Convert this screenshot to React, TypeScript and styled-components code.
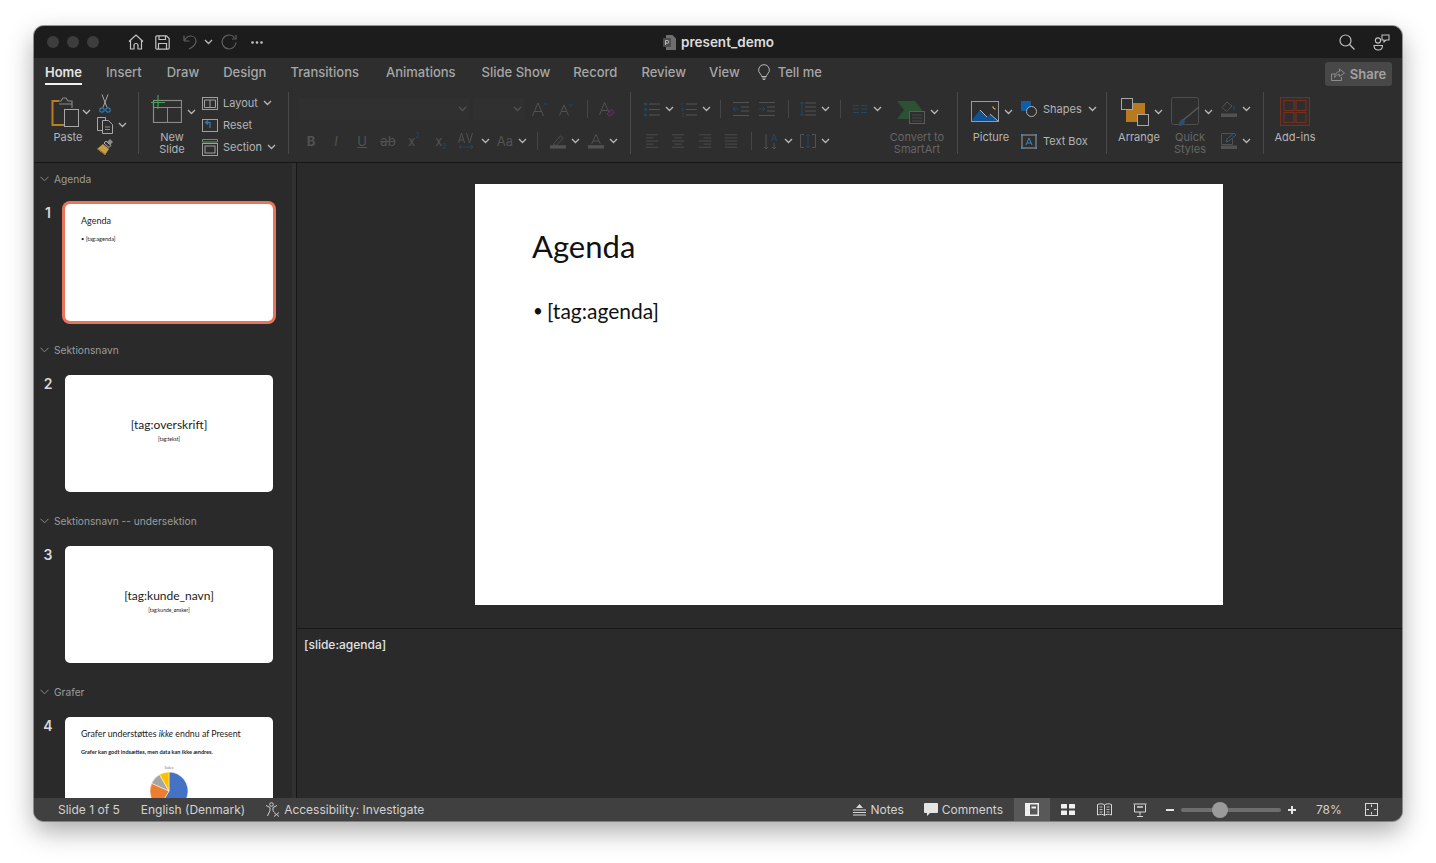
import React from "react";
import styled, {createGlobalStyle} from "styled-components";

const UI_FONT = `Inter, "Liberation Sans", sans-serif`;
const SLIDE_FONT = `Lato, "Open Sans", sans-serif`;

const ON = "#b4b4b4";
const OFF = "#525252";
const OFF_BLUE = "#24465f";

const GlobalStyle = createGlobalStyle`
  html, body {
    margin: 0;
    padding: 0;
    background: #fff;
    font-family: ${UI_FONT};
  }
`;

const Page = styled.div`
  width: 1436px;
  height: 863px;
  box-sizing: border-box;
  padding: 26px 34px 42px;
  overflow: hidden;
`;

const Window = styled.div`
  height: 100%;
  display: flex;
  flex-direction: column;
  border-radius: 10px;
  overflow: hidden;
  background: #2a2a2a;
  box-shadow: 0 0 0 1px rgba(90, 90, 90, .6), 0 10px 26px rgba(0, 0, 0, .34);
`;

/* title bar */
const TitleBar = styled.div`
  position: relative;
  height: 32px;
  flex: none;
  display: flex;
  align-items: center;
  background: #1c1c1c;
  padding-left: 13px;
`;

const Light = styled.span`
  width: 12px;
  height: 12px;
  border-radius: 50%;
  background: #3d3d3d;
  margin-right: 8px;
`;

const QuickIcon = styled.span<{ $ml: number }>`
  display: flex;
  margin-left: ${({$ml}) => $ml}px;
`;

const Title = styled.div`
  position: absolute;
  left: 629px;
  top: 0;
  height: 32px;
  display: flex;
  align-items: center;
  gap: 5px;
  font-size: 13.5px;
  font-weight: 600;
  color: #dcdcdc;
`;

const TitleRight = styled.div`
  margin-left: auto;
  display: flex;
  align-items: center;
  gap: 18px;
  padding-right: 12px;
`;

/* tabs */
const TabRow = styled.div`
  height: 32px;
  flex: none;
  display: flex;
  align-items: flex-start;
  background: #2e2e2e;
  padding: 0 10px 0 11px;
  font-size: 13px;
  font-weight: 500;
  color: #a6a6a6;
`;

const Tab = styled.div<{ $active?: boolean; $ml?: number }>`
  height: 22px;
  line-height: 22px;
  padding-top: 3px;
  margin-left: ${({$ml}) => $ml ?? 0}px;
  border-bottom: 2px solid ${({$active}) => $active ? "#f0f0f0" : "transparent"};
  color: ${({$active}) => $active ? "#e4e4e4" : "#a6a6a6"};
  font-weight: ${({$active}) => $active ? 600 : 500};
  white-space: nowrap;
`;

const TellMe = styled(Tab)`
  display: flex;
  align-items: center;
  gap: 8px;
`;

const ShareButton = styled.div`
  margin: 4px 0 0 auto;
  width: 67px;
  height: 24px;
  box-sizing: border-box;
  display: flex;
  align-items: center;
  justify-content: center;
  gap: 5px;
  border-radius: 3px;
  background: #484848;
  color: #a2a2a2;
  font-weight: 600;
`;

/* ribbon */
const Ribbon = styled.div`
  height: 73px;
  flex: none;
  box-sizing: border-box;
  display: flex;
  align-items: flex-start;
  padding-top: 2px;
  background: #2e2e2e;
  border-bottom: 1px solid #161616;
  font-size: 11px;
  font-weight: 400;
  color: ${ON};
`;

const Group = styled.div<{ $w: number }>`
  width: ${({$w}) => $w}px;
  height: 62px;
  flex: none;
  box-sizing: border-box;
  display: flex;
  border-right: 1px solid #4a4a4a;

  &:last-child {
    border-right: none;
  }
`;

const LargeTool = styled.div<{ $w: number; $ml: number; $off?: boolean }>`
  width: ${({$w}) => $w}px;
  margin-left: ${({$ml}) => $ml}px;
  flex: none;
  display: flex;
  flex-direction: column;
  align-items: center;
  color: ${({$off}) => $off ? "#666" : ON};
`;

const LargeIcon = styled.div<{ $pl?: number; $center?: boolean; $gap?: number }>`
  align-self: stretch;
  height: 39px;
  flex: none;
  box-sizing: border-box;
  display: flex;
  align-items: center;
  justify-content: ${({$center}) => $center ? "center" : "flex-start"};
  gap: ${({$gap}) => $gap ?? 5}px;
  padding-left: ${({$pl}) => $pl ?? 0}px;
`;

const Raised = styled.span<{ $by: number }>`
  display: flex;
  flex: none;
  margin-top: -${({$by}) => $by}px;
`;

const LargeLabel = styled.div`
  line-height: 12px;
  text-align: center;
  white-space: nowrap;
`;

const SmallStack = styled.div<{ $ml: number }>`
  margin-left: ${({$ml}) => $ml}px;
  flex: none;
  display: flex;
  flex-direction: column;
`;

const StackRow = styled.div`
  height: 22px;
  flex: none;
  display: flex;
  align-items: center;
  gap: 5px;
`;

const NamedRow = styled(StackRow)`
  gap: 6px;
`;

const RowColumn = styled.div<{ $w?: number }>`
  flex: none;
  width: ${({$w}) => $w ? `${$w}px` : "auto"};
  display: flex;
  flex-direction: column;
`;

const TopRow = styled.div`
  height: 34px;
  flex: none;
  display: flex;
  align-items: center;
`;

const BottomRow = styled.div`
  height: 30px;
  flex: none;
  display: flex;
  align-items: center;
`;

const DropBox = styled.div<{ $w: number; $ml?: number }>`
  width: ${({$w}) => $w}px;
  height: 22px;
  margin-left: ${({$ml}) => $ml ?? 0}px;
  box-sizing: border-box;
  display: flex;
  align-items: center;
  justify-content: flex-end;
  padding-right: 3px;
  background: #303030;
  border-radius: 2px;
`;

const Tool = styled.div<{ $ml?: number; $w?: number }>`
  width: ${({$w}) => $w ?? 16}px;
  margin-left: ${({$ml}) => $ml ?? 0}px;
  height: 18px;
  flex: none;
  display: flex;
  align-items: center;
  justify-content: center;
  font-size: 13px;
  line-height: 18px;
  color: ${OFF};
`;

const Sep = styled.div<{ $ml: number }>`
  width: 1px;
  height: 18px;
  flex: none;
  margin-left: ${({$ml}) => $ml}px;
  background: #464646;
`;

const Sup = styled.span<{ $sub?: boolean }>`
  font-size: 7px;
  line-height: 7px;
  align-self: ${({$sub}) => $sub ? "flex-end" : "flex-start"};
  color: ${OFF_BLUE};
`;

/* work area */
const Work = styled.div`
  flex: 1;
  min-height: 0;
  display: flex;
`;

const Sidebar = styled.div`
  width: 258px;
  flex: none;
  box-sizing: border-box;
  padding-top: 8px;
  overflow: hidden;
  background: #2a2a2a;
`;

const Gutter = styled.div`
  width: 4px;
  flex: none;
  background: #313131;
  border-right: 1px solid #171717;
`;

const SectionHead = styled.div`
  height: 16px;
  display: flex;
  align-items: center;
  gap: 5px;
  padding-left: 6px;
  font-size: 10.2px;
  color: #9c9c9c;
`;

const SlideRow = styled.div`
  display: flex;
  margin: 17px 0 21px;
`;

const SlideNum = styled.div`
  width: 28px;
  margin-right: 3px;
  text-align: center;
  font-size: 14px;
  font-weight: 600;
  line-height: 17px;
  color: #d8d8d8;
`;

const Thumb = styled.div<{ $selected?: boolean; $center?: boolean }>`
  width: 208px;
  height: 117px;
  flex: none;
  box-sizing: border-box;
  overflow: hidden;
  display: flex;
  flex-direction: column;
  align-items: ${({$center}) => $center ? "center" : "flex-start"};
  justify-content: ${({$center}) => $center ? "center" : "flex-start"};
  padding: ${({$center}) => $center ? "0 0 6px" : "10px 16px 0"};
  border-radius: 5px;
  background: #fff;
  color: #222;
  font-family: ${SLIDE_FONT};
  box-shadow: ${({$selected}) => $selected ? "0 0 0 3px #e9735c" : "none"};
`;

const ThumbTitle = styled.div<{ $size: number }>`
  font-size: ${({$size}) => $size}px;
  line-height: 14px;
  white-space: nowrap;
`;

const ThumbText = styled.div<{ $mt: number; $size: number; $bold?: boolean }>`
  margin-top: ${({$mt}) => $mt}px;
  font-size: ${({$size}) => $size}px;
  line-height: 7px;
  font-weight: ${({$bold}) => $bold ? 700 : 400};
  white-space: nowrap;
`;

const ChartCaption = styled.div`
  align-self: center;
  margin-top: 9px;
  font-size: 4px;
  line-height: 5px;
  color: #777;
`;

const PieHolder = styled.div`
  align-self: center;
  margin-top: 2px;
  display: flex;
`;

const MainArea = styled.div`
  flex: 1;
  min-width: 0;
  display: flex;
  flex-direction: column;
`;

const Stage = styled.div`
  height: 465px;
  flex: none;
  box-sizing: border-box;
  display: flex;
  justify-content: center;
  padding: 21px 1px 0 0;
`;

const Slide = styled.div`
  width: 748px;
  height: 421px;
  box-sizing: border-box;
  padding: 42px 57px 0;
  background: #fff;
  color: #111;
  font-family: ${SLIDE_FONT};
`;

const SlideTitle = styled.div`
  font-size: 31px;
  line-height: 40px;
`;

const SlideBullet = styled.div`
  margin-top: 31px;
  display: flex;
  font-size: 21px;
  line-height: 28px;
`;

const BulletDot = styled.span`
  width: 15px;
  flex: none;
  font-size: 17px;
  padding-left: 1px;
  box-sizing: border-box;
`;

const Notes = styled.div`
  flex: 1;
  border-top: 1px solid #171717;
  padding: 8px 7px;
  font-size: 12px;
  line-height: 16px;
  font-weight: 500;
  color: #e2e2e2;
`;

/* status bar */
const StatusBar = styled.div`
  height: 23px;
  flex: none;
  box-sizing: border-box;
  display: flex;
  align-items: center;
  padding-left: 24px;
  background: #404040;
  font-size: 12px;
  color: #d2d2d2;
  white-space: nowrap;
`;

const StatusItem = styled.div<{ $ml?: number; $w?: number }>`
  display: flex;
  align-items: center;
  gap: 4px;
  height: 100%;
  width: ${({$w}) => $w ? `${$w}px` : "auto"};
  margin-left: ${({$ml}) => $ml ?? 0}px;
`;

const StatusRight = styled.div`
  margin-left: auto;
  height: 100%;
  display: flex;
  align-items: center;
  padding-right: 24px;
`;

const ViewGroup = styled.div`
  margin-left: 11px;
  height: 100%;
  display: flex;
`;

const ViewButton = styled.div<{ $active?: boolean }>`
  width: 36px;
  height: 100%;
  display: flex;
  align-items: center;
  justify-content: center;
  background: ${({$active}) => $active ? "#585858" : "transparent"};
`;

const ZoomTrack = styled.div`
  position: relative;
  width: 100px;
  height: 4px;
  margin: 0 3px;
  border-radius: 2px;
  background: #6e6e6e;
`;

const ZoomKnob = styled.div`
  position: absolute;
  left: 31px;
  top: -6px;
  width: 16px;
  height: 16px;
  border-radius: 50%;
  background: #9b9b9b;
`;

/* icons */
type IconProps = { c?: string };

const Chev = ({c = ON}: IconProps) => (
    <svg width="9" height="6" viewBox="0 0 9 6" fill="none" style={{flex: "none"}}>
        <path d="M1 1l3.5 3.5L8 1" stroke={c} strokeWidth="1.4"/>
    </svg>
);

const SectionChev = () => (
    <svg width="9" height="6" viewBox="0 0 9 6" fill="none">
        <path d="M.5.8l4 4 4-4" stroke="#8c8c8c" strokeWidth="1"/>
    </svg>
);

const HomeIcon = () => (
    <svg width="16" height="16" viewBox="0 0 16 16" fill="none" stroke="#c4c4c4" strokeWidth="1.2">
        <path d="M1 7.5L8 1l7 6.5M2.5 6.5V15H6v-3.5a2 2 0 014 0V15h3.5V6.5"/>
    </svg>
);

const SaveIcon = () => (
    <svg width="15" height="15" viewBox="0 0 15 15" fill="none" stroke="#c4c4c4" strokeWidth="1.2">
        <path d="M2 .8h9.5l2.700 2.700V13a1.200 1.200 0 01-1.200 1.200H2A1.200 1.200 0 01.8 13V2A1.200 1.200 0 012 .8z"/>
        <path d="M4 1v3.500h6.500V1M3.500 14V8.500h8V14"/>
    </svg>
);

const UndoIcon = () => (
    <svg width="14" height="16" viewBox="0 0 14 16" fill="none" stroke="#5e5e5e" strokeWidth="1.2">
        <path d="M1 7V1.5M1 7h5.5M1 7c2-3.500 4-5 6.500-5 3 0 5.500 2 5.500 5 0 3-3 6-7 8"/>
    </svg>
);

const RedoIcon = () => (
    <svg width="16" height="16" viewBox="0 0 16 16" fill="none" stroke="#5e5e5e" strokeWidth="1.2">
        <path d="M13.5 3.5A7 7 0 108 15a7 7 0 007-6.5M15 1v4h-4"/>
    </svg>
);

const DotsIcon = () => (
    <svg width="12" height="3" viewBox="0 0 12 3" fill="#c4c4c4">
        <circle cx="1.5" cy="1.5" r="1.3"/>
        <circle cx="6" cy="1.5" r="1.3"/>
        <circle cx="10.5" cy="1.5" r="1.3"/>
    </svg>
);

const FileIcon = () => (
    <svg width="13" height="15" viewBox="0 0 13 15">
        <path d="M3 0h6.5L13 3.500V15H3z" fill="#6e6e6e"/>
        <rect y="3" width="8" height="9" rx="1" fill="#4c4c4c"/>
        <path d="M2.500 10V5.500h2a1.300 1.300 0 010 2.700h-2" fill="none" stroke="#bbb" strokeWidth="1"/>
    </svg>
);

const SearchIcon = () => (
    <svg width="16" height="16" viewBox="0 0 16 16" fill="none" stroke="#c0c0c0" strokeWidth="1.2">
        <circle cx="6.5" cy="6.5" r="5.5"/>
        <path d="M10.5 10.5L15.5 15.5"/>
    </svg>
);

const PeopleIcon = () => (
    <svg width="17" height="17" viewBox="0 0 17 17" fill="none" stroke="#c0c0c0" strokeWidth="1.1">
        <circle cx="5" cy="6.5" r="2.6"/>
        <path d="M1 11.500h8.500c0 3-1.500 4.500-4.200 4.500S1 14.500 1 11.500z"/>
        <path d="M9 1h7v5h-3l-2 2V6H9z"/>
    </svg>
);

const BulbIcon = () => (
    <svg width="12" height="16" viewBox="0 0 12 16" fill="none" stroke="#b4b4b4" strokeWidth="1">
        <path d="M6 .6a5.400 5.400 0 00-3.500 9.500c.8.800 1 1.500 1 2.400h5c0-.9.200-1.600 1-2.400A5.400 5.400 0 006 .6z"/>
        <path d="M4 14h4M4.800 15.500h2.400"/>
    </svg>
);

const ShareIcon = () => (
    <svg width="14" height="13" viewBox="0 0 14 13" fill="none" stroke="#8c8c8c" strokeWidth="1">
        <path d="M4 6H.5v6.500h10V9"/>
        <path d="M8.500 1l5 4-5 3.500v-2c-2.500 0-4 1-5 3 0-3.500 2-5.500 5-6z"/>
    </svg>
);

const PasteIcon = () => (
    <svg width="28" height="30" viewBox="0 0 28 30" fill="none" style={{flex: "none"}}>
        <path d="M8 4H1.500v24H13" stroke="#b97c22" strokeWidth="2"/>
        <path d="M8 4h2l2-3h3l2 3h4v7M8 7h13" stroke="#8a8a8a" strokeWidth="1.1"/>
        <rect x="13.5" y="12.5" width="14" height="17" fill="#2e2e2e" stroke="#a8a8a8"/>
    </svg>
);

const ScissorsIcon = () => (
    <svg width="12" height="19" viewBox="0 0 12 19" fill="none">
        <path d="M3 .5l5 13M9 .5l-5 13" stroke="#a8a8a8" strokeWidth="1"/>
        <circle cx="3" cy="16" r="2.2" stroke="#2f78b5" strokeWidth="1.2"/>
        <circle cx="9" cy="16" r="2.2" stroke="#2f78b5" strokeWidth="1.2"/>
    </svg>
);

const CopyIcon = () => (
    <svg width="16" height="17" viewBox="0 0 16 17" fill="none" stroke="#a8a8a8">
        <path d="M5 13.500H.5V.5h8v3"/>
        <path d="M5.500 3.500h6l4 4v9h-10z"/>
        <path d="M8 10h5M8 12.500h5" strokeWidth=".8"/>
    </svg>
);

const BrushIcon = () => (
    <svg width="16" height="16" viewBox="0 0 16 16">
        <path d="M9 2l5 4.500-2 2L7 4z" fill="none" stroke="#b4b4b4"/>
        <path d="M13 0l3 3-3 3-3-3z" fill="#b4b4b4" opacity=".7"/>
        <path d="M6 5l6 5-4 6-8-6z" fill="#c99b46"/>
        <path d="M1 10l8 6" stroke="#8d6a28"/>
    </svg>
);

const NewSlideIcon = () => (
    <svg width="31" height="28" viewBox="0 0 31 28" fill="none" style={{flex: "none"}}>
        <rect x="2.5" y="5.5" width="28" height="22" stroke="#8a8a8a" strokeWidth="1.2"/>
        <path d="M3 12.500h27.500M16.500 12.500v15" stroke="#8a8a8a"/>
        <path d="M7 0v14M0 7.500h14" stroke="#3fa34f" strokeWidth="1.2"/>
    </svg>
);

const LayoutIcon = () => (
    <svg width="16" height="13" viewBox="0 0 16 13" fill="none" stroke="#a0a0a0" style={{flex: "none"}}>
        <rect x=".5" y=".5" width="15" height="12"/>
        <path d="M2.500 3h11v7.500h-11zM8 3v7.500"/>
    </svg>
);

const ResetIcon = () => (
    <svg width="16" height="13" viewBox="0 0 16 13" fill="none" style={{flex: "none"}}>
        <rect x=".5" y=".5" width="15" height="12" stroke="#a0a0a0"/>
        <path d="M8 9V3.500H4M6 1.500l-2.500 2 2.500 2" stroke="#2f78b5" strokeWidth="1.3"/>
    </svg>
);

const SectionIcon = () => (
    <svg width="16" height="17" viewBox="0 0 16 17" fill="none" stroke="#a0a0a0" style={{flex: "none"}}>
        <path d="M.5.5h15V3H.5z" stroke="#5d9a6a"/>
        <rect x=".5" y="4.5" width="15" height="12"/>
        <rect x="3" y="7" width="10" height="7"/>
    </svg>
);

const SizeUpIcon = () => (
    <svg width="16" height="16" viewBox="0 0 16 16" fill="none" stroke={OFF}>
        <path d="M.5 15L6 2l5.500 13M2.500 10.500h7"/>
        <path d="M11.500 4.500l2-2.500 2 2.500" stroke={OFF_BLUE}/>
    </svg>
);

const SizeDownIcon = () => (
    <svg width="14" height="14" viewBox="0 0 14 14" fill="none" stroke={OFF}>
        <path d="M.5 13.500L5 3l4.500 10.500M2.200 9.500h5.600"/>
        <path d="M10 2l2 2.500L14 2" stroke={OFF_BLUE}/>
    </svg>
);

const ClearIcon = () => (
    <svg width="16" height="17" viewBox="0 0 16 17" fill="none" stroke={OFF}>
        <path d="M.5 14L5.500 1.500 10.500 12M2.500 9.500h6"/>
        <path d="M8 13l4.500-4.500 3 2.500-4.500 4.500z" stroke="#61365c" fill="#3e2c3c"/>
    </svg>
);

const AVIcon = () => (
    <svg width="16" height="18" viewBox="0 0 16 18" fill="none" stroke={OFF}>
        <path d="M.5 11l3-10 3 10M1.500 8h4M8.500 1l3 10 3-10"/>
        <path d="M1 15h14M3 13l-2 2 2 2M13 13l2 2-2 2" stroke={OFF_BLUE}/>
    </svg>
);

const HighlightIcon = () => (
    <svg width="17" height="15" viewBox="0 0 17 15" fill="none" stroke={OFF}>
        <path d="M4 10l7-8.500 3 2.500-7 7.500H4z"/>
        <rect y="11.5" width="17" height="3.5" fill={OFF} stroke="none"/>
    </svg>
);

const FontColorIcon = () => (
    <svg width="17" height="16" viewBox="0 0 17 16" fill="none" stroke={OFF}>
        <path d="M4 11L8.500 1 13 11M5.500 8h6"/>
        <rect y="12.5" width="17" height="3.5" fill={OFF} stroke="none"/>
    </svg>
);

const ListIcon = ({numbered}: { numbered?: boolean }) => (
    <svg width="16" height="15" viewBox="0 0 16 15" fill="none">
        <path d="M5 2h11M5 7.500h11M5 13h11" stroke={OFF}/>
        {numbered
            ? <path d="M1 .5v3M.5 6.500h2l-2 2h2M.5 11.500h2v3h-2" stroke={OFF_BLUE} strokeWidth=".8"/>
            : <path d="M0 2h3M0 7.500h3M0 13h3" stroke={OFF_BLUE} strokeWidth="2.5"/>}
    </svg>
);

const IndentIcon = ({flip}: { flip?: boolean }) => (
    <svg width="16" height="14" viewBox="0 0 16 14" fill="none">
        <path d="M0 .5h16M8 5h8M8 9h8M0 13.500h16" stroke={OFF}/>
        <path d={flip ? "M0 7h6M3.500 4.500L6 7 3.500 9.500" : "M6 7H0M2.500 4.500L0 7l2.500 2.500"} stroke={OFF_BLUE}/>
    </svg>
);

const LineSpacingIcon = () => (
    <svg width="16" height="16" viewBox="0 0 16 16" fill="none">
        <path d="M5 2h11M5 6h11M5 10h11M5 14h11" stroke={OFF}/>
        <path d="M2 1v14M0 3l2-2 2 2M0 13l2 2 2-2" stroke={OFF_BLUE}/>
    </svg>
);

const ColumnsIcon = () => (
    <svg width="14" height="8" viewBox="0 0 14 8" fill="none" stroke={OFF_BLUE}>
        <path d="M0 .5h6M8 .5h6M0 4h6M8 4h6M0 7.500h6M8 7.500h6"/>
    </svg>
);

const AlignIcon = ({mode}: { mode: "left" | "center" | "right" | "justify" }) => {
    const short = {left: "M0 5h10M0 13h10", center: "M3 5h10M3 13h10", right: "M6 5h10M6 13h10", justify: "M0 5h16M0 13h16"}[mode];
    return (
        <svg width="16" height="14" viewBox="0 0 16 18" fill="none" stroke={OFF}>
            <path d="M0 1h16M0 9h16M0 17h16"/>
            <path d={short}/>
        </svg>
    );
};

const TextDirIcon = () => (
    <svg width="16" height="17" viewBox="0 0 16 17" fill="none">
        <path d="M3 1v15M1 14l2 2 2-2" stroke={OFF}/>
        <path d="M8 8l3-7 3 7M9 6h4" stroke={OFF_BLUE}/>
        <path d="M11 10v6M9 14l2 2 2-2" stroke={OFF}/>
    </svg>
);

const TextAlignIcon = () => (
    <svg width="16" height="14" viewBox="0 0 16 14" fill="none">
        <path d="M4 .5H.5v13H4M12 .5h3.500v13H12" stroke={OFF}/>
        <path d="M8 0v14M6 2l2-2 2 2M6 12l2 2 2-2" stroke={OFF_BLUE}/>
    </svg>
);

const SmartArtIcon = () => (
    <svg width="28" height="24" viewBox="0 0 28 24" fill="none" style={{flex: "none"}}>
        <path d="M0 1h18l7 9-7 9H0l7-9z" fill="#2c5133"/>
        <rect x="12.5" y="11.5" width="15" height="12" fill="#2e2e2e" stroke="#5c5c5c"/>
        <path d="M15 15h10M15 18h10M15 21h10" stroke="#4e4e4e" strokeWidth=".8"/>
    </svg>
);

const PictureIcon = () => (
    <svg width="28" height="21" viewBox="0 0 28 21" fill="none" style={{flex: "none"}}>
        <path d="M1 19l8-10 7 7 3-3 8 7v.500H1z" fill="#0f5296"/>
        <path d="M9 9l7 7M19 13l8 7" stroke="#b8b8b8"/>
        <rect x=".5" y=".5" width="27" height="20" stroke="#9a9a9a"/>
        <path d="M22 5.500A2 2 0 0024.500 8 2.500 2.500 0 0122 5.500z" fill="#d49a3c" stroke="#d49a3c"/>
    </svg>
);

const ShapesIcon = () => (
    <svg width="16" height="16" viewBox="0 0 16 16" fill="none" style={{flex: "none"}}>
        <rect width="10" height="10" fill="#0f5fa8"/>
        <circle cx="10.5" cy="10.5" r="5" fill="#2e2e2e" stroke="#b0b0b0"/>
    </svg>
);

const TextBoxIcon = () => (
    <svg width="16" height="15" viewBox="0 0 16 15" fill="none" style={{flex: "none"}}>
        <rect x="1" y="1" width="14" height="13" stroke="#a0a0a0"/>
        <path d="M5 11l3-7 3 7M6 9h4" stroke="#3a85c5"/>
        <path d="M0 0h2v2H0zM14 0h2v2h-2zM0 13h2v2H0zM14 13h2v2h-2z" fill="#3a85c5"/>
    </svg>
);

const ArrangeIcon = () => (
    <svg width="28" height="28" viewBox="0 0 28 28" fill="none" style={{flex: "none"}}>
        <rect x="5" y="5" width="19" height="19" fill="#b97a1f"/>
        <rect x=".5" y=".5" width="11" height="11" fill="#2e2e2e" stroke="#a8a8a8"/>
        <rect x="16.5" y="16.5" width="11" height="11" fill="#2e2e2e" stroke="#a8a8a8"/>
    </svg>
);

const QuickStylesIcon = () => (
    <svg width="29" height="30" viewBox="0 0 29 30" fill="none" style={{flex: "none"}}>
        <rect x=".5" y=".5" width="27" height="27" rx="2" stroke="#4e4e4e"/>
        <path d="M11 24L28 10" stroke="#5a5a5a" strokeWidth="1.5"/>
        <path d="M8 29c0-5 2-7 4-7l2 2c0 3-3 5-6 5z" fill="#2a4f74"/>
    </svg>
);

const FillIcon = () => (
    <svg width="16" height="16" viewBox="0 0 16 16" fill="none" stroke={OFF} style={{flex: "none"}}>
        <path d="M6 1L1 6.500l4.500 4L11 5z"/>
        <path d="M13 5v4" stroke={OFF_BLUE} strokeWidth="1.5"/>
        <rect y="12.5" width="16" height="3.5" fill={OFF} stroke="none"/>
    </svg>
);

const LineIcon = () => (
    <svg width="16" height="16" viewBox="0 0 16 16" fill="none" stroke={OFF} style={{flex: "none"}}>
        <path d="M12 .5H.5v11h11V6"/>
        <path d="M5 9l1-3 7-6 2 2-7 6z" stroke="#2f5d86"/>
        <rect y="12.5" width="16" height="3.5" fill={OFF} stroke="none"/>
    </svg>
);

const AddInsIcon = () => (
    <svg width="30" height="29" viewBox="0 0 30 29" fill="none" stroke="#74301f" strokeWidth="1.2">
        <rect x=".6" y=".6" width="28.8" height="27.8"/>
        <rect x="4" y="3.5" width="10" height="10"/>
        <rect x="16" y="3.5" width="10" height="10"/>
        <rect x="4" y="15.5" width="10" height="10"/>
        <rect x="16" y="15.5" width="10" height="10"/>
    </svg>
);

const AccessIcon = () => (
    <svg width="15" height="15" viewBox="0 0 15 15" fill="none" stroke="#d0d0d0" style={{flex: "none"}}>
        <circle cx="6.5" cy="2.5" r="1.8"/>
        <path d="M1 3.500l4 2v3L2.500 14M12 3.500l-4 2v3l1 1.500"/>
        <path d="M9 10.500l5 4M14 10.500l-5 4" strokeWidth="1"/>
    </svg>
);

const NotesIcon = () => (
    <svg width="13" height="12" viewBox="0 0 13 12" fill="none" stroke="#d6d6d6">
        <path d="M0 6h13M0 8.500h13M0 11h13"/>
        <path d="M6.500 0L10 4H3z" fill="#d6d6d6" stroke="none"/>
    </svg>
);

const CommentIcon = () => (
    <svg width="14" height="13" viewBox="0 0 14 13" fill="#e4e4e4">
        <path d="M1 0h12a1 1 0 011 1v8a1 1 0 01-1 1H6l-3 3v-3H1a1 1 0 01-1-1V1a1 1 0 011-1z"/>
    </svg>
);

const NormalViewIcon = () => (
    <svg width="14" height="13" viewBox="0 0 14 13" fill="#f0f0f0">
        <path fillRule="evenodd" d="M0 0h14v13H0zM5 1.500v10h7.500v-10zM6.500 3.500H11v2H6.500z"/>
    </svg>
);

const SorterIcon = () => (
    <svg width="14" height="11" viewBox="0 0 14 11" fill="#f0f0f0">
        <rect width="6" height="4.5" rx=".5"/>
        <rect x="8" width="6" height="4.5" rx=".5"/>
        <rect y="6.5" width="6" height="4.5" rx=".5"/>
        <rect x="8" y="6.5" width="6" height="4.5" rx=".5"/>
    </svg>
);

const ReadingIcon = () => (
    <svg width="15" height="13" viewBox="0 0 15 13" fill="none" stroke="#d8d8d8">
        <path d="M.5 1.500C3 .5 6 .5 7.500 2c1.500-1.500 4.500-1.500 7-.5V12c-2.500-1-5.500-1-7 .5-1.500-1.500-4.500-1.500-7-.5zM7.500 2v10.500"/>
        <path d="M2.500 4h3M2.500 6.500h3M2.500 9h3M9.500 4h3M9.500 6.500h3M9.500 9h3" strokeWidth=".8"/>
    </svg>
);

const PresenterIcon = () => (
    <svg width="14" height="14" viewBox="0 0 14 14" fill="none" stroke="#d8d8d8">
        <path d="M.5 1h13M1.500 1.500V9h11V1.500M7 9v3.500M4 13.500h6"/>
        <path d="M4 4h6" strokeWidth="1.5"/>
    </svg>
);

const FitIcon = () => (
    <svg width="13" height="13" viewBox="0 0 13 13" fill="none" stroke="#d8d8d8">
        <rect x=".5" y=".5" width="12" height="12"/>
        <path d="M6.500 1.500V4M6.500 9v2.500M1.500 6.500H4M9 6.500h2.500"/>
    </svg>
);

const MinusIcon = () => (
    <svg width="8" height="2" viewBox="0 0 8 2" fill="#e4e4e4"><rect width="8" height="2"/></svg>
);

const PlusIcon = () => (
    <svg width="8" height="8" viewBox="0 0 8 8" fill="#e4e4e4"><path d="M3 0h2v3h3v2H5v3H3V5H0V3h3z"/></svg>
);

// pie chart from the fourth slide, slices given in degrees
const slices = [
    {from: 0, to: 211, fill: "#4472c4"},
    {from: 211, to: 294, fill: "#ed7d31"},
    {from: 294, to: 330, fill: "#a5a5a5"},
    {from: 330, to: 360, fill: "#ffc000"},
];

const slicePath = (from: number, to: number, r = 19) => {
    const point = (deg: number) => {
        const a = (deg - 90) * Math.PI / 180;
        return `${(r + r * Math.cos(a)).toFixed(2)} ${(r + r * Math.sin(a)).toFixed(2)}`;
    };
    return `M${r} ${r}L${point(from)}A${r} ${r} 0 ${to - from > 180 ? 1 : 0} 1 ${point(to)}Z`;
};

const Pie = () => (
    <svg width="38" height="38" viewBox="0 0 38 38">
        {slices.map(s => <path key={s.from} d={slicePath(s.from, s.to)} fill={s.fill} stroke="#fff" strokeWidth=".5"/>)}
    </svg>
);

const tabs: [string, number][] = [
    ["Insert", 24],
    ["Draw", 25],
    ["Design", 24],
    ["Transitions", 24],
    ["Animations", 27],
    ["Slide Show", 26],
    ["Record", 23],
    ["Review", 24],
    ["View", 23],
];

const App = () => {
    return <Page>
        <GlobalStyle/>
        <Window>
            <TitleBar>
                <Light/><Light/><Light/>
                <QuickIcon $ml={21}><HomeIcon/></QuickIcon>
                <QuickIcon $ml={11}><SaveIcon/></QuickIcon>
                <QuickIcon $ml={13}><UndoIcon/></QuickIcon>
                <QuickIcon $ml={7}><Chev/></QuickIcon>
                <QuickIcon $ml={8}><RedoIcon/></QuickIcon>
                <QuickIcon $ml={14}><DotsIcon/></QuickIcon>
                <Title><FileIcon/>present_demo</Title>
                <TitleRight><SearchIcon/><PeopleIcon/></TitleRight>
            </TitleBar>

            <TabRow>
                <Tab $active>Home</Tab>
                {tabs.map(([name, ml]) => <Tab key={name} $ml={ml}>{name}</Tab>)}
                <TellMe $ml={18}><BulbIcon/>Tell me</TellMe>
                <ShareButton><ShareIcon/>Share</ShareButton>
            </TabRow>

            <Ribbon>
                <Group $w={105}>
                    <LargeTool $w={34} $ml={17}>
                        <LargeIcon $gap={3}><PasteIcon/><Chev/></LargeIcon>
                        <LargeLabel>Paste</LargeLabel>
                    </LargeTool>
                    <SmallStack $ml={12}>
                        <StackRow><Tool><ScissorsIcon/></Tool></StackRow>
                        <StackRow><Tool><CopyIcon/></Tool><Chev/></StackRow>
                        <StackRow><Tool><BrushIcon/></Tool></StackRow>
                    </SmallStack>
                </Group>

                <Group $w={150}>
                    <LargeTool $w={42} $ml={12}>
                        <LargeIcon><Raised $by={5}><NewSlideIcon/></Raised><Chev/></LargeIcon>
                        <LargeLabel>New<br/>Slide</LargeLabel>
                    </LargeTool>
                    <SmallStack $ml={9}>
                        <StackRow><LayoutIcon/>Layout<Chev/></StackRow>
                        <StackRow><ResetIcon/>Reset</StackRow>
                        <StackRow><SectionIcon/>Section<Chev/></StackRow>
                    </SmallStack>
                </Group>

                <Group $w={342}>
                    <RowColumn>
                        <TopRow>
                            <DropBox $w={172} $ml={9}><Chev c={OFF}/></DropBox>
                            <DropBox $w={52} $ml={3}><Chev c={OFF}/></DropBox>
                            <Tool $ml={7}><SizeUpIcon/></Tool>
                            <Tool $ml={10}><SizeDownIcon/></Tool>
                            <Sep $ml={13}/>
                            <Tool $ml={11}><ClearIcon/></Tool>
                        </TopRow>
                        <BottomRow>
                            <Tool $ml={14}><b>B</b></Tool>
                            <Tool $ml={9}><i>I</i></Tool>
                            <Tool $ml={10}><u>U</u></Tool>
                            <Tool $ml={10}><s>ab</s></Tool>
                            <Tool $ml={10}>x<Sup>2</Sup></Tool>
                            <Tool $ml={11}>x<Sup $sub>2</Sup></Tool>
                            <Tool $ml={9}><AVIcon/></Tool>
                            <Tool $ml={7} $w={9}><Chev/></Tool>
                            <Tool $ml={7}>Aa</Tool>
                            <Tool $ml={5} $w={9}><Chev/></Tool>
                            <Sep $ml={10}/>
                            <Tool $ml={12}><HighlightIcon/></Tool>
                            <Tool $ml={5} $w={9}><Chev/></Tool>
                            <Tool $ml={8}><FontColorIcon/></Tool>
                            <Tool $ml={5} $w={9}><Chev/></Tool>
                        </BottomRow>
                    </RowColumn>
                </Group>

                <Group $w={327}>
                    <RowColumn $w={255}>
                        <TopRow>
                            <Tool $ml={13}><ListIcon/></Tool>
                            <Tool $ml={5} $w={9}><Chev/></Tool>
                            <Tool $ml={7}><ListIcon numbered/></Tool>
                            <Tool $ml={5} $w={9}><Chev/></Tool>
                            <Sep $ml={9}/>
                            <Tool $ml={12}><IndentIcon/></Tool>
                            <Tool $ml={10}><IndentIcon flip/></Tool>
                            <Sep $ml={13}/>
                            <Tool $ml={11}><LineSpacingIcon/></Tool>
                            <Tool $ml={5} $w={9}><Chev/></Tool>
                            <Sep $ml={10}/>
                            <Tool $ml={11}><ColumnsIcon/></Tool>
                            <Tool $ml={5} $w={9}><Chev/></Tool>
                        </TopRow>
                        <BottomRow>
                            <Tool $ml={13}><AlignIcon mode="left"/></Tool>
                            <Tool $ml={10}><AlignIcon mode="center"/></Tool>
                            <Tool $ml={11}><AlignIcon mode="right"/></Tool>
                            <Tool $ml={10}><AlignIcon mode="justify"/></Tool>
                            <Sep $ml={12}/>
                            <Tool $ml={11}><TextDirIcon/></Tool>
                            <Tool $ml={5} $w={9}><Chev/></Tool>
                            <Tool $ml={7}><TextAlignIcon/></Tool>
                            <Tool $ml={5} $w={9}><Chev/></Tool>
                        </BottomRow>
                    </RowColumn>
                    <LargeTool $w={60} $ml={1} $off>
                        <LargeIcon $pl={10}><SmartArtIcon/><Chev/></LargeIcon>
                        <LargeLabel>Convert to<br/>SmartArt</LargeLabel>
                    </LargeTool>
                </Group>

                <Group $w={149}>
                    <LargeTool $w={40} $ml={13}>
                        <LargeIcon><PictureIcon/><Chev/></LargeIcon>
                        <LargeLabel>Picture</LargeLabel>
                    </LargeTool>
                    <RowColumn>
                        <TopRow><SmallStack $ml={10}><NamedRow><ShapesIcon/>Shapes<Chev/></NamedRow></SmallStack></TopRow>
                        <BottomRow><SmallStack $ml={10}><NamedRow><TextBoxIcon/>Text Box</NamedRow></SmallStack></BottomRow>
                    </RowColumn>
                </Group>

                <Group $w={157}>
                    <LargeTool $w={40} $ml={12}>
                        <LargeIcon $pl={2}><ArrangeIcon/><Chev/></LargeIcon>
                        <LargeLabel>Arrange</LargeLabel>
                    </LargeTool>
                    <LargeTool $w={40} $ml={11} $off>
                        <LargeIcon $pl={1} $gap={4}><QuickStylesIcon/><Chev/></LargeIcon>
                        <LargeLabel>Quick<br/>Styles</LargeLabel>
                    </LargeTool>
                    <RowColumn>
                        <TopRow><SmallStack $ml={11}><StackRow><FillIcon/><Chev/></StackRow></SmallStack></TopRow>
                        <BottomRow><SmallStack $ml={11}><StackRow><LineIcon/><Chev/></StackRow></SmallStack></BottomRow>
                    </RowColumn>
                </Group>

                <Group $w={138}>
                    <LargeTool $w={50} $ml={6}>
                        <LargeIcon $center><AddInsIcon/></LargeIcon>
                        <LargeLabel>Add-ins</LargeLabel>
                    </LargeTool>
                </Group>
            </Ribbon>

            <Work>
                <Sidebar>
                    <SectionHead><SectionChev/>Agenda</SectionHead>
                    <SlideRow>
                        <SlideNum>1</SlideNum>
                        <Thumb $selected>
                            <ThumbTitle $size={9}>Agenda</ThumbTitle>
                            <ThumbText $mt={7} $size={5.6}>• [tag:agenda]</ThumbText>
                        </Thumb>
                    </SlideRow>

                    <SectionHead><SectionChev/>Sektionsnavn</SectionHead>
                    <SlideRow>
                        <SlideNum>2</SlideNum>
                        <Thumb $center>
                            <ThumbTitle $size={12}>[tag:overskrift]</ThumbTitle>
                            <ThumbText $mt={4} $size={5}>[tag:tekst]</ThumbText>
                        </Thumb>
                    </SlideRow>

                    <SectionHead><SectionChev/>Sektionsnavn -- undersektion</SectionHead>
                    <SlideRow>
                        <SlideNum>3</SlideNum>
                        <Thumb $center>
                            <ThumbTitle $size={12}>[tag:kunde_navn]</ThumbTitle>
                            <ThumbText $mt={4} $size={5}>[tag:kunde_ønsker]</ThumbText>
                        </Thumb>
                    </SlideRow>

                    <SectionHead><SectionChev/>Grafer</SectionHead>
                    <SlideRow>
                        <SlideNum>4</SlideNum>
                        <Thumb>
                            <ThumbTitle $size={8.8}>Grafer understøttes <i>ikke</i> endnu af Present</ThumbTitle>
                            <ThumbText $mt={8} $size={5.55} $bold>Grafer kan godt indsættes, men data kan ikke ændres.</ThumbText>
                            <ChartCaption>Sales</ChartCaption>
                            <PieHolder><Pie/></PieHolder>
                        </Thumb>
                    </SlideRow>
                </Sidebar>
                <Gutter/>

                <MainArea>
                    <Stage>
                        <Slide>
                            <SlideTitle>Agenda</SlideTitle>
                            <SlideBullet><BulletDot>•</BulletDot>[tag:agenda]</SlideBullet>
                        </Slide>
                    </Stage>
                    <Notes>[slide:agenda]</Notes>
                </MainArea>
            </Work>

            <StatusBar>
                <StatusItem>Slide 1 of 5</StatusItem>
                <StatusItem $ml={21}>English (Denmark)</StatusItem>
                <StatusItem $ml={20}><AccessIcon/>Accessibility: Investigate</StatusItem>
                <StatusRight>
                    <StatusItem><NotesIcon/>Notes</StatusItem>
                    <StatusItem $ml={20}><CommentIcon/>Comments</StatusItem>
                    <ViewGroup>
                        <ViewButton $active><NormalViewIcon/></ViewButton>
                        <ViewButton><SorterIcon/></ViewButton>
                        <ViewButton><ReadingIcon/></ViewButton>
                        <ViewButton><PresenterIcon/></ViewButton>
                    </ViewGroup>
                    <StatusItem $ml={8}>
                        <MinusIcon/>
                        <ZoomTrack><ZoomKnob/></ZoomTrack>
                        <PlusIcon/>
                    </StatusItem>
                    <StatusItem $ml={20} $w={25}>78%</StatusItem>
                    <StatusItem $ml={24}><FitIcon/></StatusItem>
                </StatusRight>
            </StatusBar>
        </Window>
    </Page>;
};

export default App;
